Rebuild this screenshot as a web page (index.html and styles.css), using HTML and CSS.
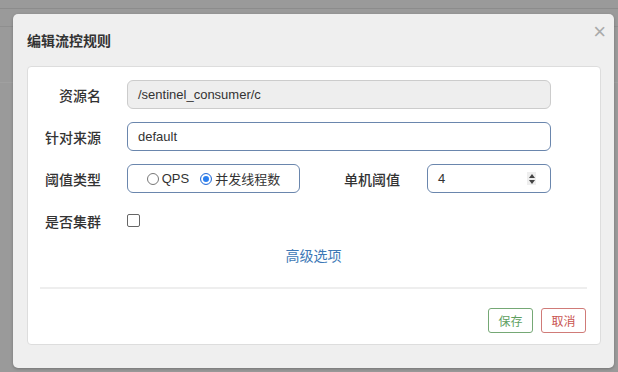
FILE: index.html
```html
<!DOCTYPE html>
<html lang="zh-CN">
<head>
  <meta charset="UTF-8" />
  <title>编辑流控规则</title>
  <link rel="stylesheet" href="styles.css">
</head>
<body>

<div class="backdrop">
  <div class="modal">
    <div class="modal-header">
      <span class="modal-title">编辑流控规则</span>
      <span class="close">&times;</span>
    </div>

    <div class="card">
      <div class="form-row">
        <label class="label">资源名</label>
        <div class="input disabled">/sentinel_consumer/c</div>
      </div>

      <div class="form-row">
        <label class="label">针对来源</label>
        <div class="input">default</div>
      </div>

      <div class="form-row">
        <label class="label">阈值类型</label>
        <div class="input radio-group">
          <span class="radio"></span><span class="opt">QPS</span>
          <span class="radio checked"></span><span class="opt">并发线程数</span>
        </div>
        <label class="label label-inline">单机阈值</label>
        <div class="input number">
          4
          <span class="spinner">
            <span class="arrow-up"></span>
            <span class="arrow-down"></span>
          </span>
        </div>
      </div>

      <div class="form-row">
        <label class="label">是否集群</label>
        <span class="checkbox"></span>
      </div>

      <div class="advanced"><a href="#">高级选项</a></div>

      <div class="divider"></div>

      <div class="actions">
        <button class="btn btn-save">保存</button>
        <button class="btn btn-cancel">取消</button>
      </div>
    </div>
  </div>
</div>

</body>
</html>
```

FILE: styles.css
```css
body {
  margin: 0;
  font-family: 'Liberation Sans', 'Noto Sans CJK SC', sans-serif;
  color: #333;
}
.backdrop {
  width: 618px;
  height: 372px;
  overflow: hidden;
  background: #9a9a9a;
  background-image:
    linear-gradient(#8c8c8c, #8c8c8c),
    linear-gradient(#8f8f8f, #8f8f8f),
    linear-gradient(#a0a0a0, #a0a0a0);
  background-size: 100% 1px, 100% 1px, 100% 1px;
  background-position: 0 8px, 0 26px, 0 82px;
  background-repeat: no-repeat;
  padding-top: 14px;
  box-sizing: border-box;
}
.modal {
  margin-left: 13px;
  width: 601px;
  height: 354px;
  background: #efefef;
  border-radius: 5px;
  box-shadow: 0 1px 3px rgba(0,0,0,0.25);
}
.modal-header {
  display: flex;
  justify-content: space-between;
  align-items: center;
  padding: 16px 8px 16px 14px;
  height: 20px;
}
.modal-title {
  font-family: 'Noto Sans CJK SC', sans-serif;
  font-size: 14px;
  font-weight: bold;
  color: #333;
}
.close {
  font-size: 22px;
  color: #aaa;
  line-height: 20px;
  margin-top: -16px;
}
.card {
  margin: 0 13px 0 14px;
  height: 279px;
  box-sizing: border-box;
  background: #fff;
  border: 1px solid #ddd;
  border-radius: 4px;
  padding: 13px 13px 12px 12px;
}
.form-row {
  display: flex;
  align-items: center;
  height: 29px;
  margin-bottom: 13px;
}
.label {
  width: 61px;
  text-align: right;
  font-family: 'Noto Sans CJK SC', sans-serif;
  font-size: 14px;
  font-weight: 500;
  color: #333;
  margin-right: 26px;
}
.label-inline {
  width: auto;
  margin-left: 44px;
  margin-right: 27px;
}
.input {
  box-sizing: border-box;
  height: 29px;
  width: 424px;
  border: 1px solid #6a86ad;
  border-radius: 6px;
  padding: 0 10px;
  display: flex;
  align-items: center;
  font-size: 13px;
  color: #333;
}
.input.disabled {
  background: #eee;
  border-color: #ccc;
}
.radio-group {
  width: 173px;
  justify-content: center;
  padding: 0;
}
.radio {
  width: 12px;
  height: 12px;
  border: 1px solid #777;
  border-radius: 50%;
  box-sizing: border-box;
  margin-right: 3px;
  background: #fff;
}
.radio.checked {
  border: 1px solid #2a6fd8;
  box-shadow: inset 0 0 0 2px #fff, inset 0 0 0 6px #2a7ff0;
}
.opt {
  margin-right: 11px;
}
.opt:last-child {
  margin-right: 0;
  font-family: 'Noto Sans CJK SC', sans-serif;
}
.number {
  width: 124px;
  justify-content: space-between;
}
.spinner {
  display: flex;
  flex-direction: column;
  align-items: center;
  justify-content: center;
  gap: 2px;
  width: 9px;
  height: 13px;
  background: #eee;
  margin-right: 4px;
}
.arrow-up, .arrow-down {
  width: 0;
  height: 0;
  border-left: 3px solid transparent;
  border-right: 3px solid transparent;
}
.arrow-up {
  border-bottom: 4px solid #444;
}
.arrow-down {
  border-top: 4px solid #444;
}
.checkbox {
  width: 11px;
  height: 11px;
  border: 1px solid #666;
  border-radius: 2px;
  background: #fff;
}
.advanced {
  text-align: center;
  margin-top: -3px;
  line-height: 20px;
}
.advanced a {
  font-family: 'Noto Sans CJK SC', sans-serif;
  font-size: 14px;
  color: #3d78b6;
  text-decoration: none;
}
.divider {
  height: 2px;
  background: #eee;
  margin: 21px 0 19px;
}
.actions {
  display: flex;
  justify-content: flex-end;
  gap: 8px;
  padding-right: 1px;
}
.btn {
  font-family: 'Noto Sans CJK SC', sans-serif;
  font-size: 12px;
  height: 25px;
  width: 45px;
  background: #fff;
  border-radius: 3px;
  border: 1px solid;
  padding: 0;
}
.btn-save {
  color: #5f9f5f;
  border-color: #75a875;
}
.btn-cancel {
  color: #c9534f;
  border-color: #d07b78;
}
```
